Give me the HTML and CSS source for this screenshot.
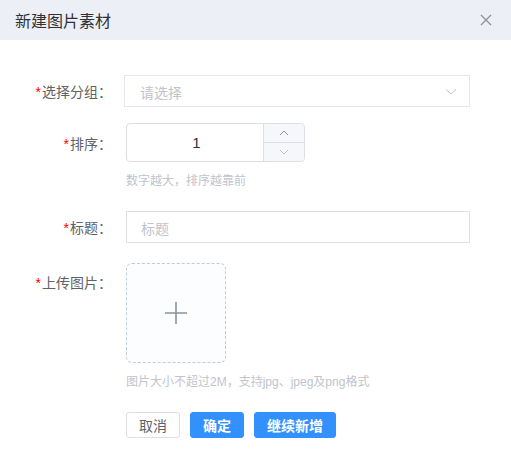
FILE: index.html
```html
<!DOCTYPE html>
<html>
<head>
    <title>新建图片素材</title>
    <meta charset="UTF-8">
<link rel="stylesheet" href="styles.css">
</head>
<body>
    <div class="dialog-header">
        <span class="dialog-title">新建图片素材</span>
        <svg class="close" width="12" height="12" viewBox="0 0 12 12">
            <path d="M1 1L11 11M11 1L1 11" stroke="#909399" stroke-width="1.4" fill="none"/>
        </svg>
    </div>

    <div class="form">
        <div class="row">
            <label class="label"><i>*</i>选择分组：</label>
            <div class="select">
                <span class="placeholder">请选择</span>
                <svg width="12" height="8" viewBox="0 0 12 8">
                    <path d="M1 1.5L6 6L11 1.5" stroke="#c0c4cc" stroke-width="1" fill="none"/>
                </svg>
            </div>
        </div>

        <div class="row row-number">
            <label class="label"><i>*</i>排序：</label>
            <div class="number">
                <span class="number-value">1</span>
                <div class="number-btns">
                    <span class="step">
                        <svg width="10" height="6" viewBox="0 0 10 6"><path d="M1 5L5 1L9 5" stroke="#909399" stroke-width="1" fill="none"/></svg>
                    </span>
                    <span class="step">
                        <svg width="10" height="6" viewBox="0 0 10 6"><path d="M1 1L5 5L9 1" stroke="#c0c4cc" stroke-width="1" fill="none"/></svg>
                    </span>
                </div>
            </div>
        </div>
        <div class="tip">数字越大，排序越靠前</div>

        <div class="row row-title">
            <label class="label"><i>*</i>标题：</label>
            <div class="input"><span class="placeholder">标题</span></div>
        </div>

        <div class="row row-upload">
            <label class="label label-top"><i>*</i>上传图片：</label>
            <div class="upload">
                <svg width="24" height="24" viewBox="0 0 24 24">
                    <path d="M12 1V23M1 12H23" stroke="#8c939d" stroke-width="1.6" fill="none"/>
                </svg>
            </div>
        </div>
        <div class="tip">图片大小不超过2M，支持jpg、jpeg及png格式</div>

        <div class="actions">
            <button class="btn">取消</button>
            <button class="btn btn-primary">确定</button>
            <button class="btn btn-primary">继续新增</button>
        </div>
    </div>
</body>
</html>
```

FILE: styles.css
```css
body {
  margin: 0;
  background: #fff;
  font-family: "Helvetica Neue", "Liberation Sans", "Noto Sans CJK SC", sans-serif;
  color: #606266;
}

/* Header */
.dialog-header {
  height: 40px;
  background: #eceff6;
  display: flex;
  align-items: center;
  justify-content: space-between;
  padding: 0 19px 0 15px;
}

.dialog-title {
  font-size: 16px;
  color: #303133;
}

/* Form */
.form {
  padding-top: 35px;
}

.row {
  display: flex;
  align-items: center;
}

.label {
  width: 112px;
  text-align: right;
  font-size: 14px;
  color: #606266;
  margin-right: 14px;
}

.label i {
  font-style: normal;
  color: #f00;
  margin-right: 1px;
}

.label-top {
  align-self: flex-start;
  line-height: 40px;
}

.placeholder {
  color: #c0c4cc;
  font-size: 14px;
}

.select {
  margin-left: -2px;
  width: 346px;
  height: 32px;
  box-sizing: border-box;
  border: 1px solid #e4e7ed;
  display: flex;
  align-items: center;
  justify-content: space-between;
  padding: 2px 12px 0 15px;
}

.row-number {
  margin-top: 16px;
}

.number {
  width: 179px;
  height: 39px;
  box-sizing: border-box;
  border: 1px solid #dcdfe6;
  border-radius: 4px;
  display: flex;
}

.number-value {
  flex: 1;
  text-align: center;
  line-height: 37px;
  font-size: 15px;
  color: #303133;
  padding-left: 3px;
}

.number-btns {
  width: 40px;
  border-left: 1px solid #dcdfe6;
  background: #f5f7fa;
  display: flex;
  flex-direction: column;
  border-radius: 0 4px 4px 0;
}

.step {
  flex: 1;
  display: flex;
  align-items: center;
  justify-content: center;
}

.step + .step {
  border-top: 1px solid #dcdfe6;
}

.tip {
  margin: 10px 0 0 126px;
  font-size: 12px;
  line-height: 18px;
  color: #c0c4cc;
}

.row-title {
  margin-top: 21px;
}

.input {
  width: 344px;
  height: 32px;
  box-sizing: border-box;
  border: 1px solid #dcdfe6;
  display: flex;
  align-items: center;
  padding: 1px 14px 0;
}

.row-upload {
  margin-top: 20px;
}

.upload {
  width: 100px;
  height: 100px;
  box-sizing: border-box;
  border: 1px dashed #c0ccda;
  border-radius: 6px;
  background: #fbfdff;
  display: flex;
  align-items: center;
  justify-content: center;
}

/* Buttons */
.actions {
  margin: 21px 0 0 126px;
  display: flex;
  gap: 10px;
}

.btn {
  height: 26px;
  padding: 0 12px;
  font-family: inherit;
  font-size: 14px;
  border: 1px solid #dcdfe6;
  background: #fff;
  color: #606266;
  border-radius: 3px;
}

.btn-primary {
  background: #3391ff;
  border-color: #3391ff;
  color: #fff;
  font-weight: bold;
}
```
